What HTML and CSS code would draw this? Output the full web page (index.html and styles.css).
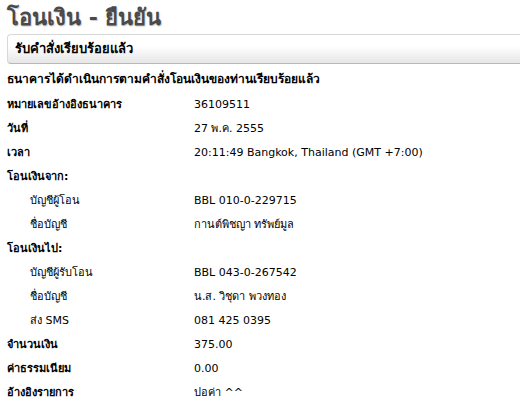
FILE: index.html
```html
<html>

<head>
  <link rel="stylesheet" href="styles.css">
</head>

<body>
  <h1 class="title">โอนเงิน - ยืนยัน</h1>
  <div class="status-box">รับคำสั่งเรียบร้อยแล้ว</div>

  <p class="notice">ธนาคารได้ดำเนินการตามคำสั่งโอนเงินของท่านเรียบร้อยแล้ว</p>

  <!-- Transfer details -->
  <div class="details">
    <div class="row"><span class="label">หมายเลขอ้างอิงธนาคาร</span><span class="value">36109511</span></div>
    <div class="row"><span class="label">วันที่</span><span class="value">27 พ.ค. 2555</span></div>
    <div class="row"><span class="label">เวลา</span><span class="value">20:11:49 Bangkok, Thailand (GMT +7:00)</span></div>
    <div class="row"><span class="label">โอนเงินจาก:</span><span class="value"></span></div>
    <div class="row sub"><span class="label">บัญชีผู้โอน</span><span class="value">BBL 010-0-229715</span></div>
    <div class="row sub"><span class="label">ชื่อบัญชี</span><span class="value">กานต์พิชญา ทรัพย์มูล</span></div>
    <div class="row"><span class="label">โอนเงินไป:</span><span class="value"></span></div>
    <div class="row sub"><span class="label">บัญชีผู้รับโอน</span><span class="value">BBL 043-0-267542</span></div>
    <div class="row sub"><span class="label">ชื่อบัญชี</span><span class="value">น.ส. วิชุดา พวงทอง</span></div>
    <div class="row sub"><span class="label">ส่ง SMS</span><span class="value">081 425 0395</span></div>
    <div class="row"><span class="label">จำนวนเงิน</span><span class="value">375.00</span></div>
    <div class="row"><span class="label">ค่าธรรมเนียม</span><span class="value">0.00</span></div>
    <div class="row"><span class="label">อ้างอิงรายการ</span><span class="value">ปอค่า ^^</span></div>
  </div>
</body>

</html>
```
FILE: styles.css
```css
body {
  font-family: Tahoma, "DejaVu Sans", "Noto Sans", sans-serif;
  font-size: 11px;
  color: #000;
  background-color: #fff;
  margin: 0;
  padding: 6px 0 0 7px;
}

.title {
  font-size: 22px;
  font-weight: bold;
  color: #4a4a4a;
  text-shadow: 1px 1px 1px #ccc;
  margin: 0;
  height: 28px;
  line-height: 24px;
}

.status-box {
  height: 28px;
  line-height: 28px;
  padding-left: 7px;
  font-weight: bold;
  font-size: 13px;
  border: 1px solid #d8d8d8;
  border-bottom-color: #b8b8b8;
  border-right: none;
  border-radius: 4px 0 0 4px;
  background: linear-gradient(#ffffff 40%, #e6e6e6);
}

.notice {
  font-weight: bold;
  font-size: 12px;
  margin: 0;
  height: 29px;
  line-height: 30px;
}

.row {
  display: flex;
  height: 24px;
  line-height: 24px;
}

.row .label {
  width: 187px;
  font-weight: bold;
}

.row.sub .label {
  font-weight: normal;
  padding-left: 23px;
  width: 164px;
}
```
